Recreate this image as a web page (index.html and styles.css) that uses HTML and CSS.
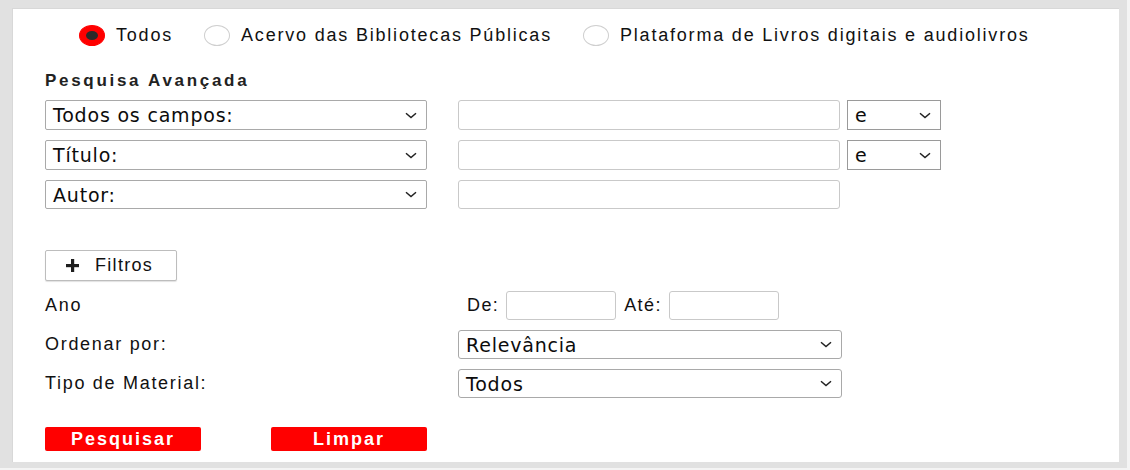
FILE: index.html
```html
<!DOCTYPE html>
<html lang="pt-BR">
<head>
<meta charset="utf-8">
<title>Pesquisa Avançada</title>
<link rel="stylesheet" href="styles.css">
</head>
<body>
<div class="panel">
  <div class="radios">
    <label class="radio"><span class="dot on"><span class="pip"></span></span><span class="rtext">Todos</span></label>
    <label class="radio"><span class="dot"></span><span class="rtext">Acervo das Bibliotecas Públicas</span></label>
    <label class="radio"><span class="dot"></span><span class="rtext">Plataforma de Livros digitais e audiolivros</span></label>
  </div>

  <h2 class="title">Pesquisa Avançada</h2>

  <div class="fields">
    <div class="row">
      <div class="select wide"><span>Todos os campos:</span><svg class="chev" viewBox="0 0 12 7"><path d="M1 1.2 L6 5.5 L11 1.2"/></svg></div>
      <div class="input wide"></div>
      <div class="select small"><span>e</span><svg class="chev" viewBox="0 0 12 7"><path d="M1 1.2 L6 5.5 L11 1.2"/></svg></div>
    </div>
    <div class="row">
      <div class="select wide"><span>Título:</span><svg class="chev" viewBox="0 0 12 7"><path d="M1 1.2 L6 5.5 L11 1.2"/></svg></div>
      <div class="input wide"></div>
      <div class="select small"><span>e</span><svg class="chev" viewBox="0 0 12 7"><path d="M1 1.2 L6 5.5 L11 1.2"/></svg></div>
    </div>
    <div class="row short">
      <div class="select wide"><span>Autor:</span><svg class="chev" viewBox="0 0 12 7"><path d="M1 1.2 L6 5.5 L11 1.2"/></svg></div>
      <div class="input wide"></div>
    </div>
  </div>

  <button class="filtros" type="button"><svg class="plus" viewBox="0 0 13 13"><rect x="5" y="0" width="3.2" height="13"/><rect x="0" y="5" width="13" height="3.2"/></svg><span>Filtros</span></button>

  <div class="opts">
    <div class="opt-row">
      <span class="lbl">Ano</span>
      <div class="range">
        <span class="rlbl">De:</span><div class="input year"></div>
        <span class="rlbl">Até:</span><div class="input year"></div>
      </div>
    </div>
    <div class="opt-row">
      <span class="lbl">Ordenar por:</span>
      <div class="select opt"><span>Relevância</span><svg class="chev" viewBox="0 0 12 7"><path d="M1 1.2 L6 5.5 L11 1.2"/></svg></div>
    </div>
    <div class="opt-row">
      <span class="lbl">Tipo de Material:</span>
      <div class="select opt"><span>Todos</span><svg class="chev" viewBox="0 0 12 7"><path d="M1 1.2 L6 5.5 L11 1.2"/></svg></div>
    </div>
  </div>

  <div class="actions">
    <button class="btn" type="button">Pesquisar</button>
    <button class="btn" type="button">Limpar</button>
  </div>
</div>
</body>
</html>
```

FILE: styles.css
```css
html, body {
  margin: 0;
  padding: 0;
  background: #f4f4f4;
}

body {
  font-family: "Liberation Sans", Arial, sans-serif;
  color: #111;
}

.panel {
  box-sizing: border-box;
  width: 1127px;
  height: 468px;
  background: #ffffff;
  border-style: solid;
  border-color: #e1e1e1;
  border-width: 8px 8px 6px 12px;
  box-shadow: inset 1px 1px 0 #d8d8d8;
  padding: 17px 0 0 33px;
}

/* radio row */
.radios {
  display: flex;
  align-items: center;
  height: 20px;
  padding-left: 34px;
}

.radio {
  display: flex;
  align-items: center;
  margin-right: 31px;
}

.dot {
  box-sizing: border-box;
  width: 26px;
  height: 21px;
  border-radius: 50%;
  border: 1px solid #cfcfcf;
  background: #fff;
  margin-right: 11px;
  display: flex;
  align-items: center;
  justify-content: center;
}

.dot.on {
  background: #ff0000;
  border-color: #ff0000;
}

.pip {
  width: 12px;
  height: 9px;
  border-radius: 50%;
  background: #2a2a2a;
}

.rtext {
  font-size: 18px;
  letter-spacing: 1.8px;
  line-height: 20px;
}

/* title */
.title {
  margin: 26px 0 0 0;
  font-size: 17px;
  line-height: 20px;
  font-weight: bold;
  letter-spacing: 2.7px;
  color: #222;
}

/* search rows */
.fields {
  margin-top: 9px;
  display: flex;
  flex-direction: column;
  gap: 10px;
}

.row {
  display: flex;
  height: 30px;
}

.row.short {
  height: 29px;
}

.select {
  box-sizing: border-box;
  height: 100%;
  border: 1px solid #a9a9a9;
  border-radius: 2px;
  background: #fff;
  display: flex;
  align-items: center;
  justify-content: space-between;
  padding: 0 9px 0 7px;
  font-family: "DejaVu Sans", Verdana, sans-serif;
  font-size: 19px;
  letter-spacing: 0.8px;
  color: #0c0c0c;
}

.select.wide {
  width: 382px;
}

.select.small {
  width: 94px;
  margin-left: 7px;
  border-radius: 0;
  border-color: #9a9a9a;
}

.chev {
  width: 12px;
  height: 7px;
  fill: none;
  stroke: #222;
  stroke-width: 1.5;
}

.input {
  box-sizing: border-box;
  height: 100%;
  border: 1px solid #c9c9c9;
  border-radius: 3px;
  background: #fff;
}

.input.wide {
  width: 382px;
  margin-left: 31px;
}

/* filtros */
.filtros {
  box-sizing: border-box;
  margin-top: 41px;
  width: 132px;
  height: 31px;
  border: 1px solid #bdbdbd;
  border-radius: 2px;
  background: #fff;
  box-shadow: 0 1px 1px rgba(0,0,0,0.12);
  display: flex;
  align-items: center;
  padding: 0 0 0 20px;
  font-family: "Liberation Sans", Arial, sans-serif;
  font-size: 18px;
  letter-spacing: 1.3px;
  color: #111;
  cursor: pointer;
}

.plus {
  width: 13px;
  height: 13px;
  fill: #1e1e1e;
  margin-right: 16px;
}

/* options */
.opts {
  margin-top: 10px;
  display: flex;
  flex-direction: column;
  gap: 10px;
}

.opt-row {
  display: flex;
  align-items: center;
  height: 29px;
}

.lbl {
  width: 413px;
  font-size: 18px;
  letter-spacing: 1.7px;
}

.range {
  display: flex;
  align-items: center;
  height: 100%;
  padding-left: 9px;
}

.rlbl {
  font-size: 18px;
  letter-spacing: 1.4px;
  margin-right: 7px;
}

.input.year {
  width: 110px;
  margin-right: 8px;
}

.select.opt {
  width: 384px;
  border-radius: 3px;
}

/* actions */
.actions {
  margin-top: 29px;
  display: flex;
  gap: 70px;
}

.btn {
  width: 156px;
  height: 24px;
  border: none;
  border-radius: 2px;
  background: #ff0000;
  color: #fff;
  font-family: "Liberation Sans", Arial, sans-serif;
  font-weight: bold;
  font-size: 18px;
  letter-spacing: 2px;
  padding: 0;
  cursor: pointer;
}
```
